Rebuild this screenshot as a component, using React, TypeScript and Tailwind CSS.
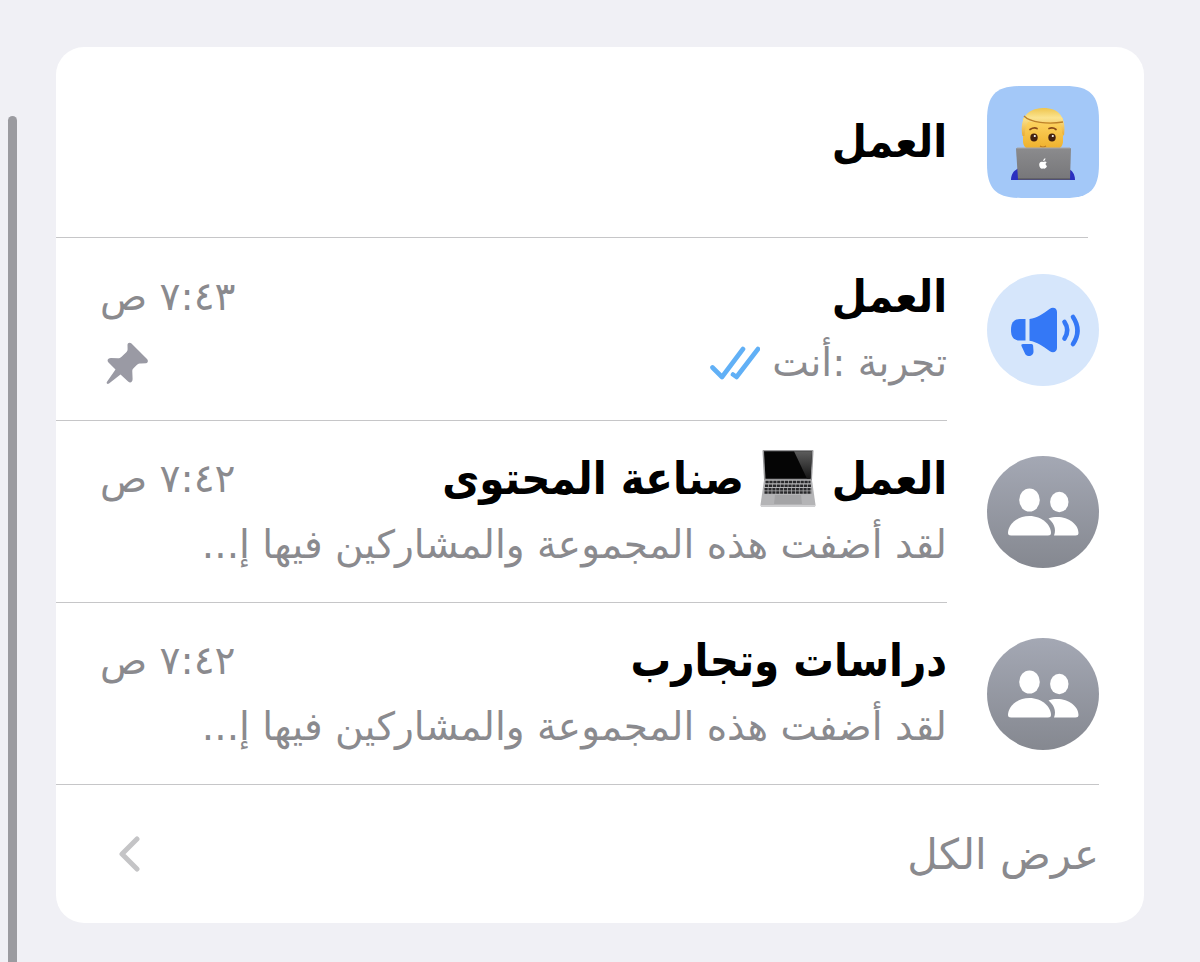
import type { ReactNode } from 'react';

function TechnologistIcon() {
  return (
    <svg viewBox="0 0 112 112" className="h-28 w-28 shrink-0" aria-hidden="true">
      <defs>
        <linearGradient id="face" x1="0" y1="0" x2="0" y2="1">
          <stop offset="0" stopColor="#ffd766" />
          <stop offset="1" stopColor="#eeb02c" />
        </linearGradient>
        <linearGradient id="hair" x1="0" y1="0" x2="0" y2="1">
          <stop offset="0" stopColor="#efc54e" />
          <stop offset=".35" stopColor="#fbe490" />
          <stop offset="1" stopColor="#e9ab35" />
        </linearGradient>
        <linearGradient id="lid" x1="0" y1="0" x2="0" y2="1">
          <stop offset="0" stopColor="#8b8b8d" />
          <stop offset="1" stopColor="#77777a" />
        </linearGradient>
      </defs>
      <path d="M0 34C0 9 9 0 34 0h44c25 0 34 9 34 34v44c0 25-9 34-34 34H34C9 112 0 103 0 78Z" fill="#a3c8f8" />
      <path d="M24 94c0-6 3-10 8-12h48c5 2 8 6 8 12Z" fill="#2a2fc0" />
      <path d="M36 32h40v23c0 4-2 7-5 8H41c-3-1-5-4-5-8Z" fill="url(#face)" />
      <path d="M35.500 50c-3-17 4-27.500 20.500-28 17 0 23.500 10 21 28l-2-3c0-5-1-9-3-11H41c-2 3-3 8-3.500 14Z" fill="url(#hair)" />
      <path d="M37 30c6 6.500 24 8.500 39 6" fill="none" stroke="#bd812a" strokeWidth="1.300" />
      <path d="M43 43.500q4-2.500 7-1M62 42.500q4-1.500 7 1" fill="none" stroke="#8b4b19" strokeWidth="1.700" strokeLinecap="round" />
      <ellipse cx="47" cy="51.500" rx="3.700" ry="4" fill="#43210f" />
      <ellipse cx="65" cy="51.500" rx="3.700" ry="4" fill="#43210f" />
      <circle cx="47.800" cy="50" r="1.100" fill="#fff" />
      <circle cx="65.800" cy="50" r="1.100" fill="#fff" />
      <path d="M53 60q3 2 6 0" fill="none" stroke="#b97822" strokeWidth="1.200" />
      <path d="M29 63q0-1 1-1h53q1 0 1 1l-1 30H31Z" fill="url(#lid)" />
      <path d="M30 62h53" stroke="#a7a7aa" />
      <path d="M31 93h52" stroke="#5d5d61" strokeWidth="1.600" />
      <path d="M56.200 76c-2.600-1-4.200.6-4 2.900.2 2.300 1.700 4 3 3.800.8-.2 1.300-.2 2 0 1.300.2 2.500-1.500 2.800-2.600-1.800-.8-1.800-3-.2-3.800-1.100-1.100-2.400-.8-3.600-.3Zm0-.8c0-1.600.9-2.600 2.200-2.900.1 1.600-.8 2.700-2.200 2.900Z" fill="#fff" />
    </svg>
  );
}

function MegaphoneIcon() {
  return (
    <svg viewBox="0 0 112 112" className="h-28 w-28 shrink-0" aria-hidden="true">
      <circle cx="56" cy="56" r="56" fill="#d6e6fb" />
      <g fill="#3478f6">
        <path d="M38.500 45v21.500H33c-6 0-9-3-9-10.700S27 45 33 45Z" />
        <path d="M42.500 45C50 44 56 40 62.500 35c3.500-2.500 7.500-1 7.500 3v36c0 4-4 5.500-7.500 3C56 72 50 68 42.500 66.700Z" />
        <path d="M36 70h8.500q1.500 0 1.600 1.500l.4 5.500c.3 5.500-6 6.500-8.300 3L34.500 72q-.7-2 1.500-2Z" />
      </g>
      <g fill="none" stroke="#3478f6" strokeWidth="4.600" strokeLinecap="round">
        <path d="M77.500 48q5.500 8 0 16.500" />
        <path d="M86 43q9 13.500 0 27" />
      </g>
    </svg>
  );
}

function GroupIcon() {
  return (
    <svg viewBox="0 0 112 112" className="h-28 w-28 shrink-0" aria-hidden="true">
      <defs>
        <linearGradient id="group" x1="0" y1="0" x2="0" y2="1">
          <stop offset="0" stopColor="#a4a8b4" />
          <stop offset="1" stopColor="#858890" />
        </linearGradient>
      </defs>
      <circle cx="56" cy="56" r="56" fill="url(#group)" />
      <g fill="#fff">
        <ellipse cx="42.500" cy="44" rx="10.300" ry="11.500" />
        <ellipse cx="72.300" cy="46" rx="9.200" ry="10.200" />
        <path d="M21 77c0-8 9-17 21.500-17S64 69 64 77q0 2.500-3 2.500H24q-3 0-3-2.500Z" />
        <path d="M61.500 62.500c15-5 30 4 30 14.500q0 2.500-3 2.500H67c3-7-1-13.500-5.500-17Z" />
      </g>
    </svg>
  );
}

function LaptopIcon() {
  return (
    <svg viewBox="0 0 56 60" className="h-[60px] w-14 shrink-0" role="img" aria-label="حاسوب محمول">
      <defs>
        <linearGradient id="glare" x1="0" y1="0" x2="0" y2="1">
          <stop offset="0" stopColor="#5c5c5c" />
          <stop offset="1" stopColor="#161616" />
        </linearGradient>
      </defs>
      <path d="M2.500 2q0-1 1-1h49q1 0 1 1L52 31H4Z" fill="#98989a" />
      <path d="M4 2.300h48l-1.500 27.400h-45Z" fill="#050505" />
      <path d="M34 2.300h18l-1.500 27.400H47Z" fill="url(#glare)" />
      <path d="M4 31h48l3.500 25q0 2-2 2h-51q-2 0-2-2Z" fill="#b4b4b6" />
      <path d="M5.500 33h45M5 36.700h46M4.500 40.300h47M4.500 43.500h47" stroke="#29292b" strokeWidth="2.400" strokeDasharray="3.200 .7" />
      <path d="M15 46h26l1 9H14Z" fill="#a4a4a6" />
      <path d="M.5 56h55q0 2-2 2h-51q-2 0-2-2Z" fill="#cfcfd1" />
    </svg>
  );
}

function ReadTicks() {
  return (
    <svg viewBox="0 0 50 34" className="h-[34px] w-[50px] shrink-0" role="img" aria-label="تمت القراءة">
      <path
        d="M2.500 21.500 12 31 33 3M23 28.500l3.500 2.500L48 3"
        fill="none"
        stroke="#61b0f6"
        strokeWidth="4.600"
        strokeLinecap="round"
        strokeLinejoin="round"
      />
    </svg>
  );
}

function PinIcon() {
  return (
    <svg viewBox="0 0 42 42" className="h-[42px] w-[42px]" role="img" aria-label="مثبتة">
      <path
        d="M21.500 3C21.500.5 24 0 25.500 1.500L41 17c1.500 1.500 1 4-1 4.200l-5 .3c-2 0-3 .3-4 1.300l-3.500 3.500c-1 1-1.300 2-1.200 3.500l.3 7.200c0 3-2.300 4.500-4.500 2.500L14.500 32.500 3 41.500c-1.500 1-3 0-2-1.800L9.500 27.500 2.500 20.500c-2-2-.5-4.500 2.500-4.500l7 .2c1.500 0 2.300-.2 3.300-1.200l5-4.700c1-1 1.300-1.800 1.300-3.300Z"
        fill="#9a9aa4"
      />
    </svg>
  );
}

type Chat = {
  title: ReactNode;
  time: string;
  preview: string;
  kind: 'announcement' | 'group';
  read?: boolean;
  pinned?: boolean;
};

const chats: Chat[] = [
  { title: 'العمل', time: '٧:٤٣ ص', preview: 'تجربة :أنت', kind: 'announcement', read: true, pinned: true },
  {
    title: (
      <>
        <span>العمل</span>
        <LaptopIcon />
        <span>صناعة المحتوى</span>
      </>
    ),
    time: '٧:٤٢ ص',
    preview: 'لقد أضفت هذه المجموعة والمشاركين فيها إ...',
    kind: 'group',
  },
  { title: 'دراسات وتجارب', time: '٧:٤٢ ص', preview: 'لقد أضفت هذه المجموعة والمشاركين فيها إ...', kind: 'group' },
];

function ChatRow({ chat, last }: { chat: Chat; last: boolean }) {
  return (
    <li className={last ? 'ms-[45px] border-b border-[#c6c6c8]' : 'ms-[45px]'}>
      <a href="#" className="flex items-stretch gap-10">
        <span className="flex items-center">{chat.kind === 'group' ? <GroupIcon /> : <MegaphoneIcon />}</span>
        <span
          className={
            last
              ? 'flex h-[181px] min-w-0 grow flex-col pe-11 pt-[26px]'
              : 'flex h-[182px] min-w-0 grow flex-col border-b border-[#c6c6c8] pe-11 pt-[26px]'
          }
        >
          <span className="flex h-16 items-center justify-between">
            <span className="flex items-center gap-4 font-['DejaVu_Sans_Condensed','DejaVu_Sans',sans-serif] text-[45px] font-bold whitespace-nowrap text-black">
              {chat.title}
            </span>
            <span className="text-[39px] whitespace-nowrap text-[#8a8a8e]">{chat.time}</span>
          </span>
          <span className="flex h-[68px] items-center justify-between">
            <span className="flex items-center gap-3 text-[39px] whitespace-nowrap text-[#8a8a8e]">
              {chat.preview}
              {chat.read && <ReadTicks />}
            </span>
            {chat.pinned && (
              <span className="pe-1.5">
                <PinIcon />
              </span>
            )}
          </span>
        </span>
      </a>
    </li>
  );
}

export default function App() {
  return (
    <main dir="rtl" lang="ar" className="relative min-h-screen bg-[#f0f0f5] px-14 pt-[47px] pb-[39px] font-['DejaVu_Sans',sans-serif]">
      <div className="absolute top-[116px] bottom-0 left-2 w-[9px] rounded-t-full bg-[#9b9ba0]" />
      <section className="overflow-hidden rounded-[28px] bg-white">
        <header className="ms-14 border-b border-[#c6c6c8]">
          <div className="-ms-[11px] flex h-[190px] items-center gap-10">
            <TechnologistIcon />
            <h1 className="font-['DejaVu_Sans_Condensed','DejaVu_Sans',sans-serif] text-[45px] font-bold text-black">العمل</h1>
          </div>
        </header>
        <ul className="pt-px">
          {chats.map((chat, i) => (
            <ChatRow key={i} chat={chat} last={i === chats.length - 1} />
          ))}
        </ul>
        <a href="#" className="flex h-[138px] items-center justify-between ps-[45px] pe-[62px] text-[42px] text-[#8a8a8e]">
          <span>عرض الكل</span>
          <svg viewBox="0 0 22 36" className="h-9 w-[22px]" aria-hidden="true">
            <path d="M19 3 4 18l15 15" fill="none" stroke="#c4c4c6" strokeWidth="5" strokeLinecap="round" strokeLinejoin="round" />
          </svg>
        </a>
      </section>
    </main>
  );
}
